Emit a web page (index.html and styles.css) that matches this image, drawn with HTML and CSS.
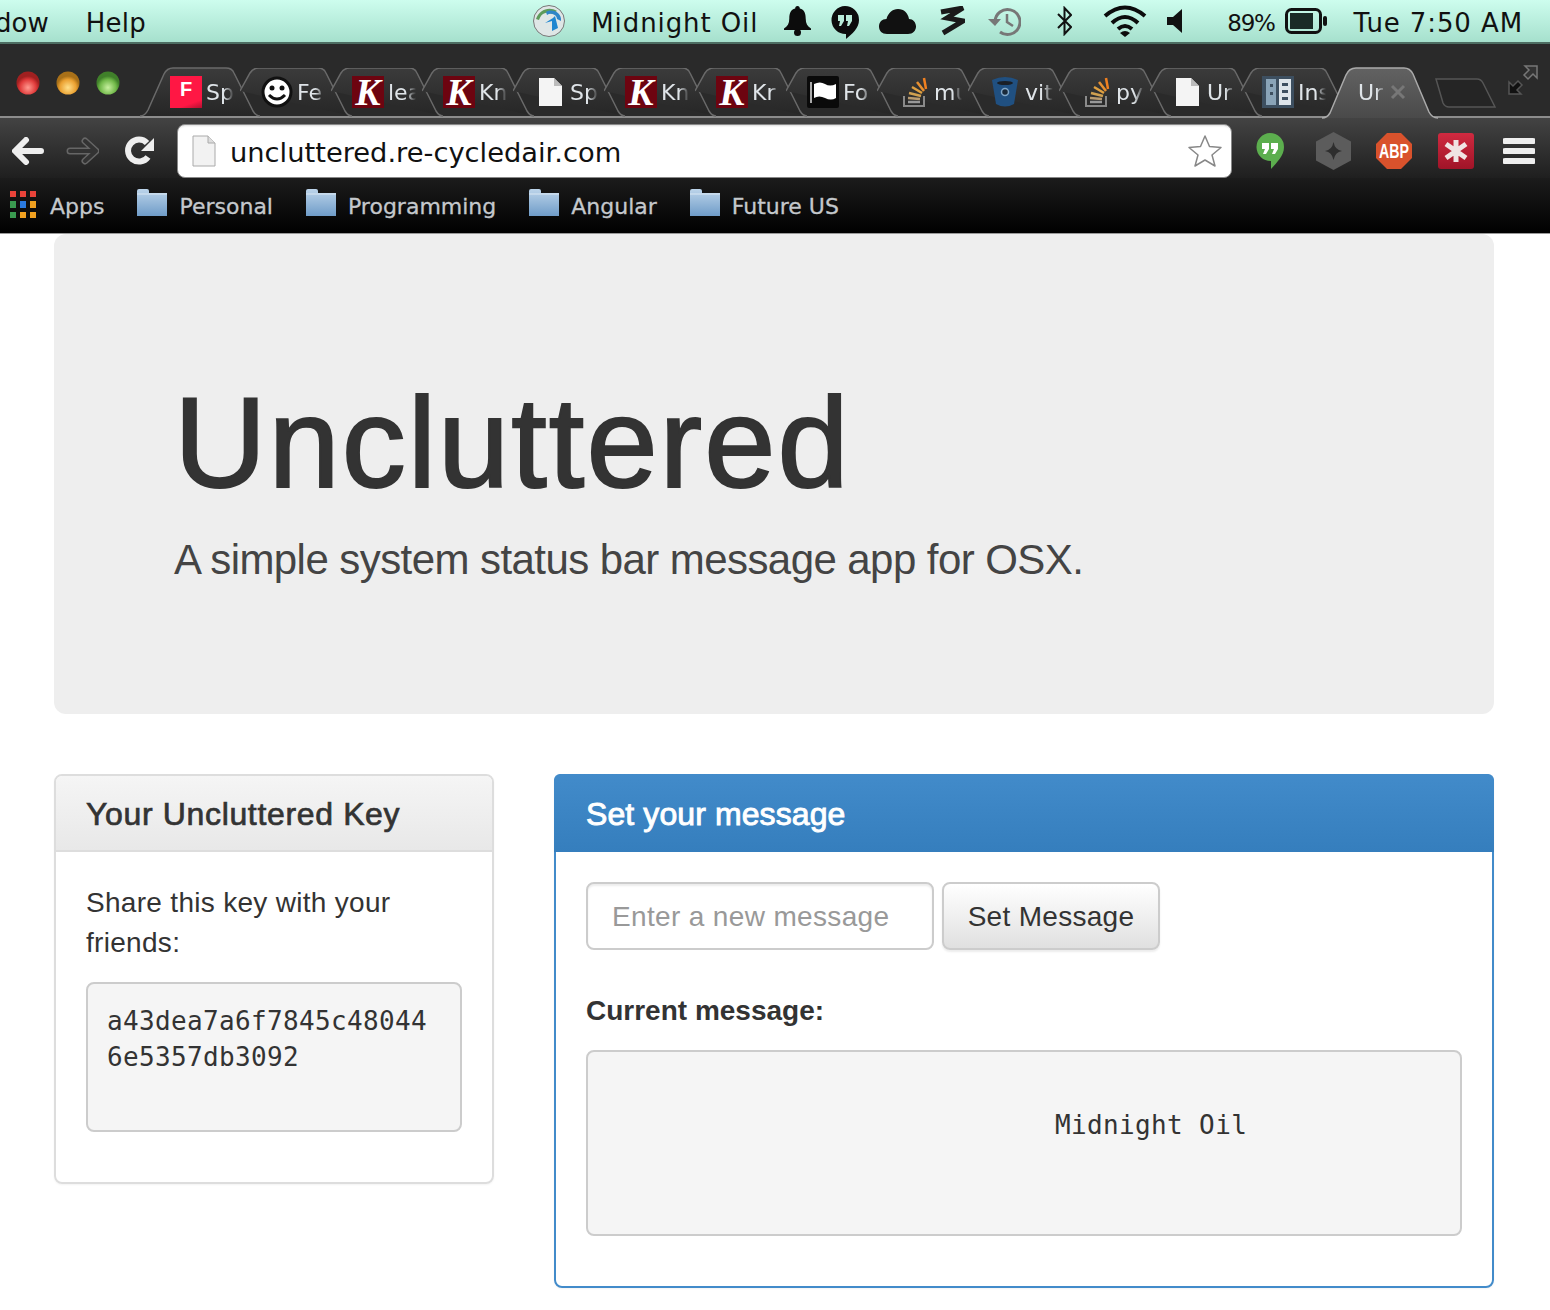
FILE: index.html
```html
<!DOCTYPE html>
<html lang="en">
<head>
  <meta charset="UTF-8">
  <title>Uncluttered</title>
  <link rel="stylesheet" href="styles.css">
</head>
<body>
  <svg class="defs" width="0" height="0">
    <defs>
      <linearGradient id="tabFill" x1="0" y1="0" x2="0" y2="1"><stop offset="0" stop-color="#3b3b3b"/><stop offset="1" stop-color="#262626"/></linearGradient>
      <linearGradient id="activeFill" x1="0" y1="0" x2="0" y2="1"><stop offset="0" stop-color="#626262"/><stop offset="1" stop-color="#4a4a4a"/></linearGradient>
      <linearGradient id="folderFill" x1="0" y1="0" x2="0" y2="1"><stop offset="0" stop-color="#bcd4ea"/><stop offset="1" stop-color="#6f9cc8"/></linearGradient>
      <linearGradient id="lastFill" x1="0" y1="0" x2="0" y2="1"><stop offset="0" stop-color="#d02a40"/><stop offset="1" stop-color="#a01428"/></linearGradient>
      <radialGradient id="lightRed" cy="0.7"><stop offset="0" stop-color="#ff9a90"/><stop offset="0.7" stop-color="#e03a3a"/><stop offset="1" stop-color="#a02020"/></radialGradient>
      <radialGradient id="lightYellow" cy="0.7"><stop offset="0" stop-color="#ffe08a"/><stop offset="0.7" stop-color="#eaa030"/><stop offset="1" stop-color="#a87018"/></radialGradient>
      <radialGradient id="lightGreen" cy="0.7"><stop offset="0" stop-color="#c8f0a0"/><stop offset="0.7" stop-color="#70b848"/><stop offset="1" stop-color="#40802a"/></radialGradient>
      <symbol id="tabShape" viewBox="0 0 112 49"><path d="M0 23 L10 5 Q13 0 19 0 H78 Q84 0 86 5 L105 43 Q108 48 112 48" fill="url(#tabFill)" stroke="#6a6a6a" stroke-width="1.5"/></symbol>
      <symbol id="pageIcon" viewBox="0 0 32 32"><path d="M5 2H20L28 10V30H5z" fill="#f4f4f4"/><path d="M20 2V10H28z" fill="#bbb"/></symbol>
      <symbol id="stackIcon" viewBox="0 0 32 32"><path d="M6 20V30H26V20" fill="none" stroke="#8a8a8a" stroke-width="2"/><path d="M10 26H22" stroke="#999" stroke-width="2.5"/><path d="M10 22L22 23" stroke="#b89a70" stroke-width="2.5"/><path d="M11 17L23 20" stroke="#d0a050" stroke-width="2.5"/><path d="M14 11L24 17" stroke="#e0a040" stroke-width="2.5"/><path d="M19 6L26 15" stroke="#e89030" stroke-width="2.5"/><path d="M26 2L28 13" stroke="#f08020" stroke-width="2.5"/></symbol>
      <symbol id="folderIcon" viewBox="0 0 32 28"><path d="M1 5V2Q1 0 3 0H11Q13 0 13 2V4H31V27H1z" fill="url(#folderFill)"/><path d="M1 5H31" stroke="#dbe8f4"/></symbol>
    </defs>
  </svg>

  <div class="menu-bar">
    <span class="menu-item menu-first">dow</span>
    <span class="menu-item menu-help">Help</span>
    <div class="status-items">
      <svg class="ic-globe" viewBox="0 0 32 32"><circle cx="16" cy="16" r="15.5" fill="#dfe6e6" stroke="#777"/><path d="M3 14C6 5 16 1 24 6L19 9C14 6 8 8 6 15z" fill="#5d9b5a"/><path d="M13 7C20 3 29 8 28 16L24 14C24 10 18 7 14 10z" fill="#2f86c8"/><path d="M22 11L25 23L19 26L19 16L12 18L20 13z" fill="#1f86d0"/></svg>
      <span class="menu-item status-app">Midnight Oil</span>
      <svg class="ic-bell" viewBox="0 0 27 30"><path d="M13.5 0c1.6 0 2.3 1 2.3 2.4 4.6 1 5.9 5 5.9 10 0 5 1.8 8 5.3 10.100v1.500H0v-1.500c3.500-2.100 5.300-5.100 5.300-10.100 0-5 1.300-9 5.900-10C11.200 1 11.900 0 13.500 0z" fill="#0c0c0c"/><circle cx="13.500" cy="26.500" r="3.500" fill="#0c0c0c"/></svg>
      <svg class="ic-hang" viewBox="0 0 28 33"><path d="M14 0a14 14 0 0 1 14 14c0 8-7 14-13 19v-5A14 14 0 0 1 14 0z" fill="#0c0c0c"/><path d="M7 9h6v6l-3 5H8l1-5H7zM15 9h6v6l-3 5h-2l1-5h-2z" fill="#b8ecd9"/></svg>
      <svg class="ic-cloud" viewBox="0 0 37 26"><path d="M8 26C3 26 0 23 0 18.500S3 11 7.500 11C9 5 13.500 1 19 1c6 0 10 4 11 10 4 0 7 3.500 7 7.500S34 26 29 26z" fill="#111"/></svg>
      <svg class="ic-zig" viewBox="0 0 26 30"><path d="M2 6L24 2L8 12L24 15L4 27" fill="none" stroke="#1a1a1a" stroke-width="5"/></svg>
      <svg class="ic-clock" viewBox="0 0 33 33"><path d="M7 16.500A12.500 12.500 0 1 1 12 27" fill="none" stroke="#777" stroke-width="3"/><path d="M0 14H13L7 21z" fill="#777"/><path d="M19 9V17L25 21" fill="none" stroke="#777" stroke-width="2.500"/></svg>
      <svg class="ic-blue" viewBox="0 0 15 30"><path d="M1 8L14 21L7.500 28V2L14 9L1 22" fill="none" stroke="#111" stroke-width="2"/></svg>
      <svg class="ic-wifi" viewBox="0 0 44 32"><path d="M2 11Q22 -6 42 11M9 18Q22 6 35 18M15 24Q22 18 29 24" fill="none" stroke="#0c0c0c" stroke-width="4"/><path d="M17 28Q22 24 27 28L22 32z" fill="#0c0c0c"/></svg>
      <svg class="ic-speaker" viewBox="0 0 15 24"><path d="M0 8H6L15 0V24L6 16H0z" fill="#111"/></svg>
      <span class="menu-item status-battery">89%</span>
      <svg class="ic-battery" viewBox="0 0 42 26"><rect x="1.500" y="1.500" width="34" height="23" rx="5" fill="none" stroke="#111" stroke-width="3"/><rect x="5" y="5" width="23" height="16" fill="#1a2a26"/><rect x="38" y="8" width="4" height="10" rx="2" fill="#111"/></svg>
      <span class="menu-item status-time">Tue 7:50 AM</span>
    </div>
  </div>

  <div class="browser">
    <div class="tab-strip">
      <div class="lights">
        <svg class="light" viewBox="0 0 24 24"><circle cx="12" cy="12" r="11.500" fill="url(#lightRed)"/></svg>
        <svg class="light" viewBox="0 0 24 24"><circle cx="12" cy="12" r="11.500" fill="url(#lightYellow)"/></svg>
        <svg class="light" viewBox="0 0 24 24"><circle cx="12" cy="12" r="11.500" fill="url(#lightGreen)"/></svg>
      </div>
      <div class="tabs">
        <div class="tab tab-first">
          <svg class="tab-bg" viewBox="0 0 120 49"><path d="M0 48Q5 48 8 42L24 6Q27 0 33 0H86Q92 0 94 5L113 43Q116 48 120 48" fill="url(#tabFill)" stroke="#6a6a6a" stroke-width="1.500"/></svg>
          <span class="fav fav-f">F</span><span class="tab-label">Sp</span>
        </div>
        <div class="tab">
          <svg class="tab-bg"><use href="#tabShape"/></svg>
          <svg class="fav" viewBox="0 0 32 32"><circle cx="16" cy="16" r="14" fill="#fff" stroke="#111" stroke-width="3"/><circle cx="11" cy="12" r="2.500" fill="#111"/><circle cx="21" cy="12" r="2.500" fill="#111"/><path d="M8 19Q16 27 24 19" fill="none" stroke="#111" stroke-width="3"/></svg>
          <span class="tab-label">Fe</span>
        </div>
        <div class="tab"><svg class="tab-bg"><use href="#tabShape"/></svg><span class="fav fav-k">K</span><span class="tab-label">lea</span></div>
        <div class="tab"><svg class="tab-bg"><use href="#tabShape"/></svg><span class="fav fav-k">K</span><span class="tab-label">Kn</span></div>
        <div class="tab"><svg class="tab-bg"><use href="#tabShape"/></svg><svg class="fav"><use href="#pageIcon"/></svg><span class="tab-label">Sp</span></div>
        <div class="tab"><svg class="tab-bg"><use href="#tabShape"/></svg><span class="fav fav-k">K</span><span class="tab-label">Kn</span></div>
        <div class="tab"><svg class="tab-bg"><use href="#tabShape"/></svg><span class="fav fav-k">K</span><span class="tab-label">Kr</span></div>
        <div class="tab">
          <svg class="tab-bg"><use href="#tabShape"/></svg>
          <svg class="fav" viewBox="0 0 32 32"><rect width="32" height="32" rx="2" fill="#0a0a0a"/><path d="M4 6V27" stroke="#aaa" stroke-width="2"/><path d="M7 8Q13 5 18 8T29 8V22Q24 25 18 22T7 22z" fill="#fff"/></svg>
          <span class="tab-label">Fo</span>
        </div>
        <div class="tab"><svg class="tab-bg"><use href="#tabShape"/></svg><svg class="fav"><use href="#stackIcon"/></svg><span class="tab-label">mu</span></div>
        <div class="tab">
          <svg class="tab-bg"><use href="#tabShape"/></svg>
          <svg class="fav" viewBox="0 0 32 32"><path d="M3 4Q16 -2 29 4L25 28Q16 33 7 28z" fill="#205081"/><ellipse cx="16" cy="7" rx="8" ry="2" fill="#1a1f26"/><circle cx="16" cy="16" r="3.500" fill="#1a2a3a" stroke="#7fa6c8" stroke-width="1.500"/></svg>
          <span class="tab-label">vit</span>
        </div>
        <div class="tab"><svg class="tab-bg"><use href="#tabShape"/></svg><svg class="fav"><use href="#stackIcon"/></svg><span class="tab-label">py</span></div>
        <div class="tab"><svg class="tab-bg"><use href="#tabShape"/></svg><svg class="fav"><use href="#pageIcon"/></svg><span class="tab-label">Ur</span></div>
        <div class="tab">
          <svg class="tab-bg"><use href="#tabShape"/></svg>
          <svg class="fav" viewBox="0 0 32 32"><rect width="32" height="32" fill="#3d4f60"/><rect x="4" y="3" width="10" height="26" fill="#8aa4b8"/><rect x="17" y="3" width="12" height="26" fill="#dde4ea"/><path d="M8 8h3v3H8zM8 16h3v3H8zM20 7h6v3h-6zM20 14h6v3h-6zM20 21h6v3h-6z" fill="#3d4f60"/></svg>
          <span class="tab-label">Ins</span>
        </div>
        <div class="tab tab-active">
          <svg class="tab-bg" viewBox="0 0 116 50"><path d="M0 50Q5 50 8 45L24 7Q27 0 34 0H82Q88 0 91 6L107 44Q110 50 116 50" fill="url(#activeFill)" stroke="#aaa" stroke-width="1.500"/></svg>
          <span class="tab-label">Ur</span>
          <svg class="tab-close" viewBox="0 0 16 16"><path d="M2 2L14 14M14 2L2 14" stroke="#777" stroke-width="3"/></svg>
        </div>
        <svg class="new-tab" viewBox="0 0 62 30"><path d="M1 1H42Q46 1 48 5L60 29H14Q10 29 8 25z" fill="#252525" stroke="#555" stroke-width="1.500"/></svg>
      </div>
      <svg class="full-screen" viewBox="0 0 30 30"><path d="M17 1H29V13L25 9L20 14L16 10L21 5z" fill="#333" stroke="#777" stroke-width="1.500"/><path d="M1 17V29H13L9 25L14 20L10 16L5 21z" fill="#111" stroke="#555" stroke-width="1.500"/></svg>
    </div>

    <div class="toolbar">
      <svg class="ic-back" viewBox="0 0 32 28"><path d="M14 3L3 14L14 25M4 14H29" fill="none" stroke="#eee" stroke-width="6" stroke-linecap="round" stroke-linejoin="round"/></svg>
      <svg class="ic-fwd" viewBox="0 0 33 28"><path d="M19 4L30 14L19 24M29 14H4" fill="none" stroke="#666" stroke-width="7" stroke-linecap="round" stroke-linejoin="round"/><path d="M19 4L30 14L19 24M29 14H4" fill="none" stroke="#333" stroke-width="4" stroke-linecap="round" stroke-linejoin="round"/></svg>
      <svg class="ic-reload" viewBox="0 0 30 30"><path d="M23 21A11 11 0 1 1 22 7" fill="none" stroke="#eee" stroke-width="6"/><path d="M29 2V15H16z" fill="#eee"/></svg>
      <div class="omnibox">
        <svg class="omni-page" viewBox="0 0 24 32"><path d="M1 1H16L23 8V31H1z" fill="#f2f2f2" stroke="#aaa"/><path d="M16 1V8H23" fill="#ddd" stroke="#aaa"/></svg>
        <span class="omni-url">uncluttered.re-cycledair.com</span>
        <svg class="omni-star" viewBox="0 0 36 34"><path d="M18 2L22.500 12.500L34 13.500L25 21L28 32L18 26L8 32L11 21L2 13.500L13.500 12.500z" fill="#fff" stroke="#888" stroke-width="1.500" stroke-linejoin="round"/></svg>
      </div>
      <svg class="ext-hang" viewBox="0 0 28 36"><path d="M14 0a14 14 0 0 1 14 14c0 9-7 15-13 22v-8A14 14 0 0 1 14 0z" fill="#5cae4e"/><path d="M6 10h7v6l-3 5H7l2-5H6zM15 10h7v6l-3 5h-3l2-5h-3z" fill="#fff"/></svg>
      <svg class="ext-hex" viewBox="0 0 35 38"><path d="M17.500 0L35 9.500V28.500L17.500 38L0 28.500V9.500z" fill="#5c5c5c"/><path d="M17.500 10Q19 18 26 19Q19 20 17.500 28Q16 20 9 19Q16 18 17.500 10z" fill="#2e2e2e"/></svg>
      <svg class="ext-abp" viewBox="0 0 36 36"><path d="M11 0H25L36 11V25L25 36H11L0 25V11z" fill="#d9522c"/><text x="3" y="25" textLength="30" lengthAdjust="spacingAndGlyphs" class="abp-text">ABP</text></svg>
      <svg class="ext-last" viewBox="0 0 36 36"><rect width="36" height="36" rx="3" fill="url(#lastFill)"/><path d="M18 7V29M8 11L28 25M28 11L8 25" stroke="#f0e4e4" stroke-width="5"/></svg>
      <svg class="ext-menu" viewBox="0 0 32 28"><path d="M2 4H30M2 14H30M2 24H30" stroke="#eee" stroke-width="6" stroke-linecap="round"/></svg>
    </div>

    <div class="bookmarks">
      <svg class="apps-grid" viewBox="0 0 26 27">
        <rect width="6" height="6" fill="#e8433a"/><rect x="10" width="6" height="6" fill="#e8433a"/><rect x="20" width="6" height="6" fill="#e8433a"/>
        <rect y="10" width="6" height="7" fill="#3a9a50"/><rect x="10" y="10" width="6" height="7" fill="#2a7ae0"/><rect x="20" y="10" width="6" height="7" fill="#f0a020"/>
        <rect y="21" width="6" height="6" fill="#3a9a50"/><rect x="10" y="21" width="6" height="6" fill="#f0a020"/><rect x="20" y="21" width="6" height="6" fill="#f0a020"/>
      </svg>
      <span class="bm-label bm-apps">Apps</span>
      <svg class="bm-folder"><use href="#folderIcon"/></svg><span class="bm-label">Personal</span>
      <svg class="bm-folder"><use href="#folderIcon"/></svg><span class="bm-label">Programming</span>
      <svg class="bm-folder"><use href="#folderIcon"/></svg><span class="bm-label">Angular</span>
      <svg class="bm-folder"><use href="#folderIcon"/></svg><span class="bm-label">Future US</span>
    </div>
  </div>

  <div class="page">
    <div class="jumbotron">
      <h1>Uncluttered</h1>
      <p class="lead">A simple system status bar message app for OSX.</p>
    </div>

    <div class="columns">
      <div class="panel">
        <div class="panel-heading"><h3>Your Uncluttered Key</h3></div>
        <div class="panel-body">
          <p class="share-text">Share this key with your friends:</p>
          <pre>a43dea7a6f7845c480446e5357db3092

</pre>
        </div>
      </div>

      <div class="panel panel-primary">
        <div class="panel-heading"><h3>Set your message</h3></div>
        <div class="panel-body">
          <form class="message-form">
            <input type="text" class="message-input" placeholder="Enter a new message">
            <button type="button" class="message-button">Set Message</button>
          </form>
          <p class="current-label">Current message:</p>
          <pre>

                            Midnight Oil


</pre>
        </div>
      </div>
    </div>
  </div>
</body>
</html>
```

FILE: styles.css
```css
* {
  box-sizing: border-box;
}
html, body {
  height: 1310px;
  overflow: hidden;
}
body {
  margin: 0;
  background-color: white;
  font-family: "Liberation Sans", Arial, sans-serif;
  font-size: 28px;
  color: #333;
}
svg {
  display: block;
  flex: none;
}
.defs {
  position: absolute;
}

/* Menu bar */
.menu-bar {
  display: flex;
  align-items: center;
  height: 44px;
  background: linear-gradient(#cdfdee, #a6e0cd);
  border-bottom: 2px solid #4d6d62;
  overflow: hidden;
}
.menu-item {
  padding-top: 3px;
  font-family: "DejaVu Sans", sans-serif;
  font-size: 26px;
  color: #111;
  white-space: nowrap;
}
.menu-first {
  margin-left: -5px;
}
.menu-help {
  margin-left: 37px;
  letter-spacing: 0.3px;
}
.status-items {
  display: flex;
  align-items: center;
  margin-left: auto;
  padding-right: 27px;
}
.ic-globe { width: 32px; height: 32px; }
.status-app { margin-left: 26px; letter-spacing: 0.9px; }
.ic-bell { width: 27px; height: 30px; margin-left: 26px; }
.ic-hang { width: 28px; height: 33px; margin-left: 20px; margin-top: 2px; }
.ic-cloud { width: 37px; height: 26px; margin-left: 20px; }
.ic-zig { width: 26px; height: 30px; margin-left: 23px; }
.ic-clock { width: 33px; height: 33px; margin-left: 23px; }
.ic-blue { width: 15px; height: 30px; margin-left: 36px; }
.ic-wifi { width: 44px; height: 32px; margin-left: 31px; }
.ic-speaker { width: 15px; height: 24px; margin-left: 20px; }
.status-battery { margin-left: 45px; font-size: 23px; letter-spacing: -1.3px; }
.ic-battery { width: 42px; height: 26px; margin-left: 10px; }
.status-time { margin-left: 27px; letter-spacing: 0.9px; }

/* Browser chrome */
.browser {
  height: 190px;
  border-bottom: 1px solid #999;
}
.tab-strip {
  display: flex;
  height: 74px;
  padding-top: 24px;
  background-color: #2a2a2a;
  border-bottom: 2px solid #8c8c8c;
}
.lights {
  display: flex;
  gap: 16px;
  padding: 3px 0 0 16px;
}
.light {
  width: 24px;
  height: 24px;
}
.tabs {
  display: flex;
  margin-left: 29px;
}
.tab {
  position: relative;
  display: flex;
  align-items: center;
  width: 91px;
  height: 48px;
  padding-left: 21px;
}
.tab-bg {
  position: absolute;
  left: 0;
  top: 0;
  width: 112px;
  height: 49px;
  overflow: visible;
}
.tab-first .tab-bg {
  left: -9px;
  width: 120px;
}
.tab-active {
  width: 101px;
  padding-left: 22px;
}
.tab-active .tab-bg {
  left: -10px;
  width: 116px;
  height: 50px;
}
.fav {
  position: relative;
  flex: none;
  width: 32px;
  height: 32px;
}
.fav-f {
  background: linear-gradient(160deg, #ff1744 80%, #b01030);
  color: white;
  font-weight: bold;
  font-size: 20px;
  line-height: 26px;
  text-align: center;
}
.fav-k {
  background-color: #6d0410;
  color: white;
  font-family: "Liberation Serif", serif;
  font-style: italic;
  font-weight: bold;
  font-size: 38px;
  line-height: 32px;
  text-align: center;
  overflow: hidden;
}
.tab-label {
  position: relative;
  width: 28px;
  margin-left: 4px;
  overflow: hidden;
  font-family: "DejaVu Sans", sans-serif;
  font-size: 22px;
  color: #dfe4e8;
  white-space: nowrap;
  mask-image: linear-gradient(to right, black 65%, transparent);
}
.tab-close {
  position: relative;
  width: 16px;
  height: 16px;
  margin-left: 4px;
}
.new-tab {
  width: 62px;
  height: 30px;
  margin: 10px 0 0 2px;
}
.full-screen {
  width: 30px;
  height: 30px;
  margin: -3px 0 0 11px;
}
.toolbar {
  display: flex;
  align-items: center;
  height: 60px;
  padding: 6px 15px 0 12px;
  background: linear-gradient(#434343, #1f1f1f);
}
.ic-back { width: 32px; height: 28px; }
.ic-fwd { width: 33px; height: 28px; margin-left: 22px; }
.ic-reload { width: 30px; height: 30px; margin-left: 26px; }
.omnibox {
  display: flex;
  align-items: center;
  width: 1056px;
  height: 54px;
  margin-left: 22px;
  padding: 0 8px 0 14px;
  background-color: white;
  border: 1px solid #888;
  border-radius: 8px;
  box-shadow: inset 0 3px 2px -2px #ddd;
}
.omni-page { width: 24px; height: 32px; }
.omni-url {
  margin-left: 14px;
  padding-top: 2px;
  font-family: "DejaVu Sans", sans-serif;
  font-size: 27.3px;
  color: #111;
  white-space: nowrap;
}
.omni-star { width: 36px; height: 34px; margin-left: auto; }
.ext-hang { width: 28px; height: 36px; margin-left: 24px; }
.ext-hex { width: 35px; height: 38px; margin-left: 32px; }
.ext-abp { width: 36px; height: 36px; margin-left: 25px; }
.abp-text {
  font-family: "Liberation Sans", sans-serif;
  font-weight: bold;
  font-size: 20px;
  fill: white;
}
.ext-last { width: 36px; height: 36px; margin-left: 26px; }
.ext-menu { width: 32px; height: 28px; margin-left: 29px; }
.bookmarks {
  display: flex;
  align-items: center;
  height: 55px;
  padding: 0 0 2px 10px;
  background: linear-gradient(#1c1c1c, #000);
}
.apps-grid {
  width: 26px;
  height: 27px;
}
.bm-folder {
  width: 32px;
  height: 28px;
  margin: 0 0 4px 32px;
}
.bm-label {
  margin-left: 11px;
  padding-top: 4px;
  font-family: "DejaVu Sans", sans-serif;
  font-size: 22px;
  color: #c4c8cc;
  -webkit-text-stroke: 0.3px currentColor;
  white-space: nowrap;
}
.bm-apps {
  margin-left: 14px;
}

/* Page */
.page {
  padding: 0 56px 0 54px;
}
.jumbotron {
  margin-bottom: 60px;
  padding: 138px 120px 124px;
  background-color: #eee;
  border-radius: 12px;
}
.jumbotron h1 {
  margin: 0 0 19px;
  font-size: 128px;
  font-weight: normal;
  line-height: 141px;
  letter-spacing: 2px;
  -webkit-text-stroke: 2px currentColor;
}
.lead {
  margin: -2px 0 1px;
  font-size: 42px;
  line-height: 59px;
  letter-spacing: -0.57px;
  color: #444;
}
.columns {
  display: grid;
  grid-template-columns: 440px 940px;
  gap: 60px;
  align-items: start;
}
.panel {
  border: 2px solid #ddd;
  border-radius: 8px;
  box-shadow: 0 1px 2px rgba(0, 0, 0, 0.05);
}
.panel-heading {
  height: 76px;
  padding: 1px 30px 0;
  background: linear-gradient(#f5f5f5, #e8e8e8);
  border-bottom: 2px solid #ddd;
  border-radius: 6px 6px 0 0;
}
.panel-heading h3 {
  margin: 0;
  font-size: 32px;
  font-weight: normal;
  line-height: 74px;
  -webkit-text-stroke: 0.7px currentColor;
  letter-spacing: 0.65px;
}
.panel-primary {
  border-color: #428bca;
}
.panel-primary .panel-heading {
  margin: -2px -2px 0;
  height: 78px;
  padding: 3px 32px 0;
  background: linear-gradient(#428bca, #357ebd);
  border-bottom: none;
  color: white;
}
.panel-primary .panel-heading h3 {
  letter-spacing: 0.1px;
  -webkit-text-stroke: 0.9px currentColor;
}
.panel-body {
  padding: 30px;
}
.share-text {
  margin: 0 0 19px;
  padding-top: 1px;
  line-height: 40px;
  letter-spacing: 0.3px;
}
pre {
  margin: 0 0 20px;
  padding: 19px;
  background-color: #f5f5f5;
  border: 2px solid #ccc;
  border-radius: 8px;
  font-family: "DejaVu Sans Mono", monospace;
  font-size: 26px;
  line-height: 36px;
  letter-spacing: 0.35px;
  white-space: pre-wrap;
  word-break: break-all;
}
.message-form {
  display: flex;
  gap: 8px;
}
.message-input {
  width: 348px;
  height: 68px;
  padding: 2px 24px 0;
  background-color: white;
  border: 2px solid #ccc;
  border-radius: 8px;
  box-shadow: inset 0 2px 2px rgba(0, 0, 0, 0.075);
  font-family: inherit;
  font-size: 28px;
  letter-spacing: 0.35px;
  color: #555;
}
.message-input::placeholder {
  color: #999;
}
.message-button {
  width: 218px;
  height: 68px;
  padding: 2px 0 0;
  background: linear-gradient(#fff, #e0e0e0);
  border: 2px solid #ccc;
  border-radius: 8px;
  box-shadow: 0 2px 2px rgba(0, 0, 0, 0.075);
  font-family: inherit;
  font-size: 28px;
  letter-spacing: 0.3px;
  color: #333;
}
.current-label {
  margin: 40px 0 19px;
  padding-top: 1px;
  font-weight: bold;
  line-height: 40px;
}
```
